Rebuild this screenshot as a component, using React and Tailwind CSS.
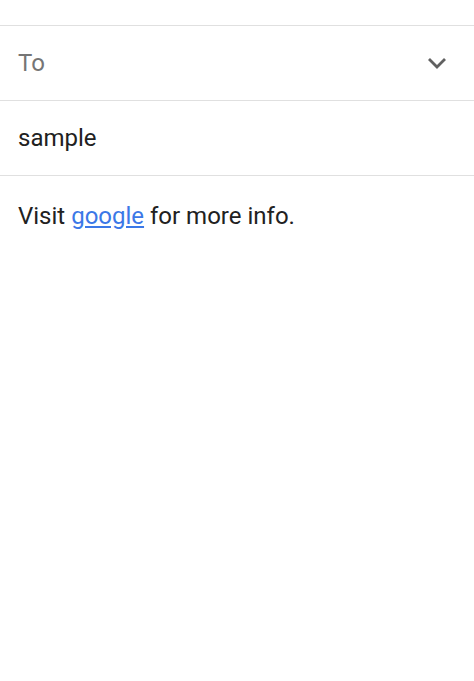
import React from 'react'

const Chevron = () => (
  <svg width="20" height="14" viewBox="0 0 20 14" className="text-[#616161]">
    <path d="M2 3 10 11 18 3" fill="none" stroke="currentColor" strokeWidth="2.8" />
  </svg>
)

const App = () => (
  <div className="min-h-[681px] bg-white font-['Roboto',sans-serif] text-[24px]">
    <div className="h-[25px]" />
    <div className="flex h-[75px] items-center justify-between border-t border-[#e0e0e0] pl-[18px] pr-[27px]">
      <span className="text-[#757575]">To</span>
      <Chevron />
    </div>
    <div className="flex h-[75px] items-center border-t border-[#e0e0e0] px-[18px] text-[#212121]">
      sample
    </div>
    <div className="border-t border-[#e0e0e0] px-[18px] pt-[22px] text-[#212121]">
      Visit{' '}
      <a href="#" className="text-[#3b78e7] underline">
        google
      </a>{' '}
      for more info.
    </div>
  </div>
)

export default App
